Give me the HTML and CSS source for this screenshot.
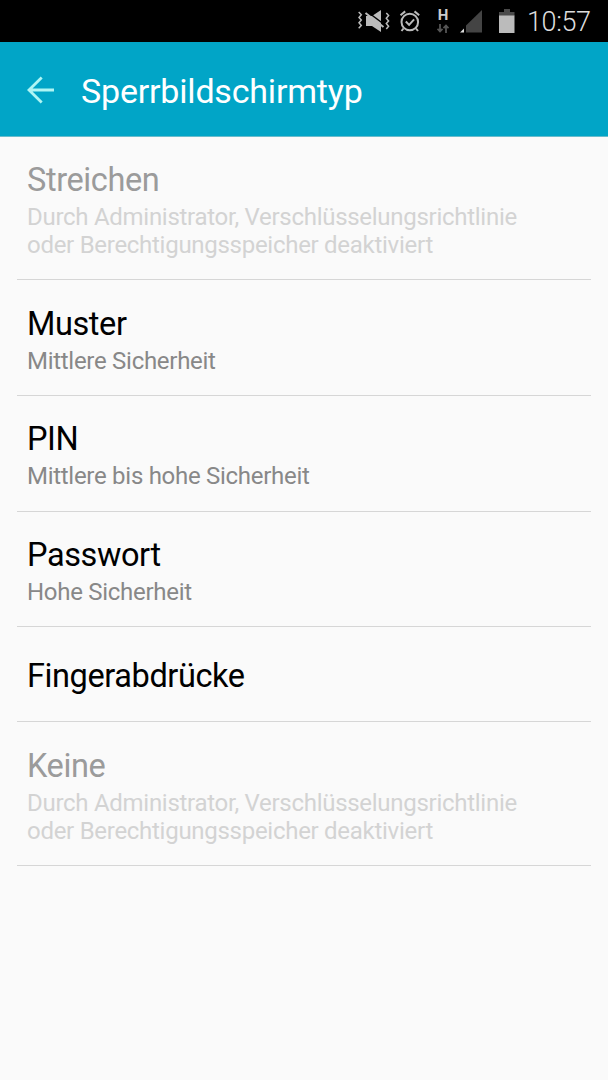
FILE: index.html
```html
<!DOCTYPE html>
<html lang="de">
<head>
    <meta charset="UTF-8">
    <meta name="viewport" content="width=device-width, initial-scale=1.0">
    <title>Sperrbildschirmtyp</title>
    <link rel="stylesheet" href="styles.css">
</head>
<body>

    <div class="status-bar">
        <!-- muted speaker with vibration -->
        <svg class="vibrate" width="34" height="42" viewBox="357 0 34 42">
            <g fill="none" stroke="#bbb" stroke-width="1.5">
                <path d="M358.7 12l2.6 2.7-2.3 2.7 2.3 2.7-2.3 2.7 2.3 2.7-2.6 2.7"/>
                <path d="M386.3 13l2.3 2.5-2.3 2.7 2.3 2.7-2.3 2.7 2.3 2.7-2.3 2.7"/>
            </g>
            <path fill="#bbb" d="M366 16h6l9-6v22l-9-6h-6z"/>
            <path stroke="#000" stroke-width="1.5" d="M367 11.5l18 13.5"/>
            <path stroke="#bbb" stroke-width="2" d="M365.5 13l18 14"/>
        </svg>
        <!-- alarm -->
        <svg class="alarm" width="22" height="42" viewBox="399 0 22 42" fill="none" stroke="#bbb" stroke-width="2">
            <circle cx="409.8" cy="22" r="8.3"/>
            <path d="M400.5 15.2l4.7-3.8M419.2 15.2l-4.7-3.8M405.8 21.5l3.3 3.4 5-5.5M403.5 28.5l-2 2.5M416 28.5l2 2.5"/>
        </svg>
        <div class="network">
            <span>H</span>
            <svg width="12" height="9" viewBox="0 0 12 9" fill="none" stroke="#555" stroke-width="1.8">
                <path d="M3 0v7.5M0.5 4.8L3 7.5l2.5-2.7M9 9V1.5M6.5 4.2L9 1.5l2.5 2.7"/>
            </svg>
        </div>
        <!-- signal -->
        <svg class="signal" width="24" height="42" viewBox="459 0 24 42">
            <path fill="#ddd" d="M460 32.5h4v-4z"/>
            <path fill="#444" d="M466 32.5h16V10l-16 15.5z"/>
        </svg>
        <!-- battery -->
        <svg class="battery" width="16" height="42" viewBox="499 0 16 42">
            <path fill="#4a4a4a" d="M499 12h5V9h6v3h4.5v4H499z"/>
            <path fill="#bbb" d="M499 15.5h15.5V33H499z"/>
        </svg>
        <span class="clock">10:57</span>
    </div>

    <header class="action-bar">
        <svg class="back" width="28" height="28" viewBox="0 0 28 28" fill="none" stroke="#aff5f4" stroke-width="2.8">
            <path d="M14.7 1.5L2 14l12.7 12.5M2 14h25"/>
        </svg>
        <h1>Sperrbildschirmtyp</h1>
    </header>

    <ul class="lock-list">
        <li class="disabled tall">
            <h2>Streichen</h2>
            <p>Durch Administrator, Verschlüsselungsrichtlinie<br>oder Berechtigungsspeicher deaktiviert</p>
        </li>
        <li>
            <h2>Muster</h2>
            <p>Mittlere Sicherheit</p>
        </li>
        <li>
            <h2>PIN</h2>
            <p>Mittlere bis hohe Sicherheit</p>
        </li>
        <li>
            <h2>Passwort</h2>
            <p>Hohe Sicherheit</p>
        </li>
        <li class="single">
            <h2>Fingerabdrücke</h2>
        </li>
        <li class="disabled tall">
            <h2>Keine</h2>
            <p>Durch Administrator, Verschlüsselungsrichtlinie<br>oder Berechtigungsspeicher deaktiviert</p>
        </li>
    </ul>

</body>
</html>
```

FILE: styles.css
```css
* {
    box-sizing: border-box;
}
body {
    font-family: Roboto, sans-serif;
    background-color: #fafafa;
    margin: 0;
    height: 1080px;
    overflow: hidden;
}
.status-bar {
    display: flex;
    height: 42px;
    padding-left: 357px;
    background-color: #000;
}
.alarm {
    margin-left: 8px;
}
.network {
    display: flex;
    flex-direction: column;
    width: 12px;
    margin-left: 16px;
    padding-top: 9px;
}
.network span {
    height: 15px;
    font-size: 15px;
    font-weight: 700;
    line-height: 13px;
    text-align: center;
    color: #ccc;
}
.signal {
    margin-left: 10px;
}
.battery {
    margin-left: 16px;
}
.clock {
    margin-left: 12px;
    font-size: 27px;
    font-weight: 300;
    letter-spacing: -0.4px;
    line-height: 45px;
    color: #ddd;
    white-space: nowrap;
}
.action-bar {
    display: flex;
    align-items: center;
    height: 95px;
    padding: 1px 0 0 27px;
    background-color: #01a5c7;
    border-bottom: 1px solid #69bccc;
}
.action-bar h1 {
    margin: 2px 0 0 26px;
    font-size: 34px;
    font-weight: 400;
    letter-spacing: -0.2px;
    line-height: 40px;
    color: #fff;
}
.lock-list {
    list-style: none;
    margin: 0;
    padding: 0 17px;
}
.lock-list li {
    height: 115.7px;
    padding: 23.3px 10px 0;
    border-bottom: 1px solid #d6d6d6;
}
.lock-list .tall {
    height: 143.4px;
}
.lock-list .single {
    height: 95px;
    padding-top: 29px;
}
.lock-list h2 {
    margin: 0;
    font-size: 32.5px;
    font-weight: 400;
    letter-spacing: -0.4px;
    line-height: 40px;
    color: #000;
}
.lock-list p {
    margin: 3px 0 0;
    font-size: 24px;
    letter-spacing: -0.28px;
    line-height: 28px;
    color: #888;
    white-space: nowrap;
}
.lock-list .disabled h2 {
    color: #9b9b9b;
}
.lock-list .disabled p {
    color: #d3d3d3;
}
```
